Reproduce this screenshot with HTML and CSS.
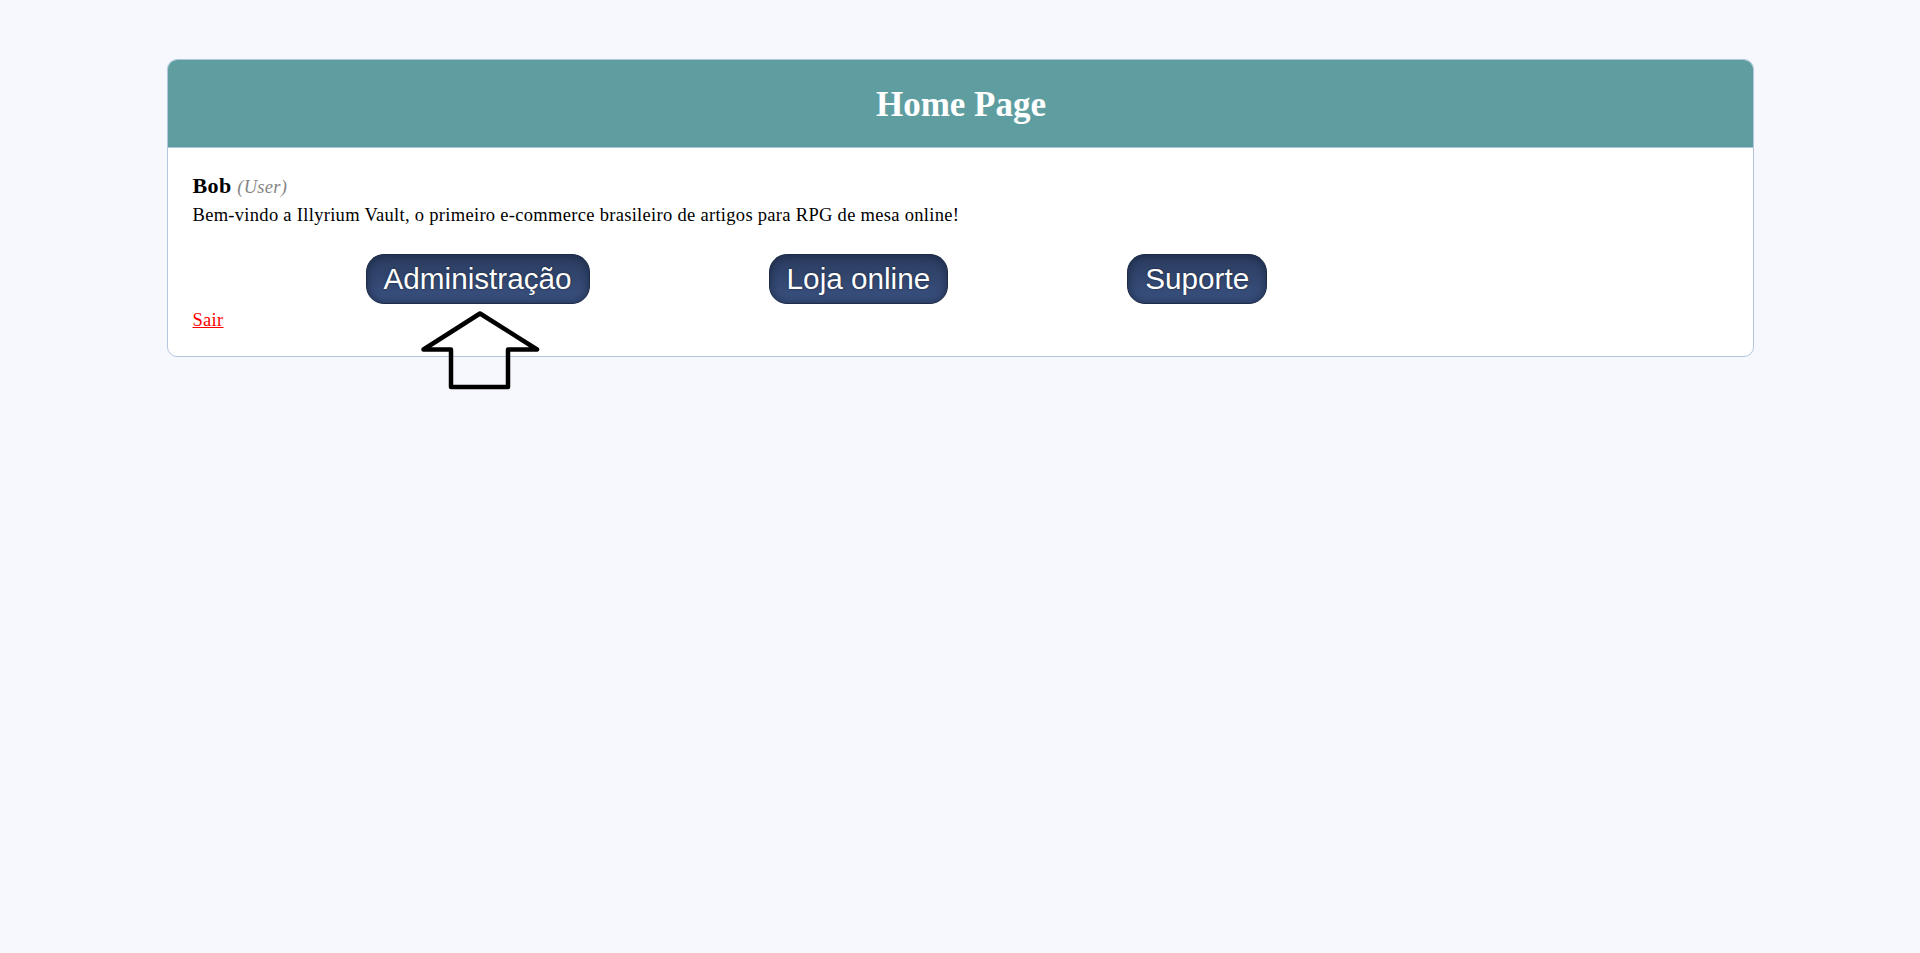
FILE: index.html
```html
<!DOCTYPE html>
<html lang="pt-BR">
<head>
<meta charset="utf-8">
<title>Home Page</title>
<link rel="stylesheet" href="styles.css">
</head>
<body>
<div class="page">
  <div class="card">
    <div class="card-header">
      <h1 class="title">Home Page</h1>
    </div>
    <div class="card-body">
      <div class="user"><span class="user-name">Bob</span> <span class="user-role">(User)</span></div>
      <p class="welcome">Bem-vindo a Illyrium Vault, o primeiro e-commerce brasileiro de artigos para RPG de mesa online!</p>
      <div class="actions">
        <a class="btn" href="#">Administração</a>
        <a class="btn" href="#">Loja online</a>
        <a class="btn" href="#">Suporte</a>
      </div>
      <a class="logout" href="#">Sair</a>
    </div>
  </div>
  <svg class="pointer" width="120" height="80" viewBox="0 0 120 80" aria-hidden="true">
    <polygon points="59,2.5 116,38.5 87,38.5 87,76 30,76 30,38.5 2.5,38.5" fill="none" stroke="#000" stroke-width="4.5" stroke-linejoin="round"/>
  </svg>
</div>
</body>
</html>
```
FILE: styles.css
```css
html, body {
  margin: 0;
  padding: 0;
}
html {
  min-height: 100%;
  background: #f7f8fe;
}
body {
  min-height: 100vh;
  box-sizing: border-box;
  background: #f7f8fe;
  font-family: "Liberation Serif", "Times New Roman", serif;
  font-size: 18.5px;
  color: #000;
  padding-top: 59px;
}
.page {
  position: relative;
  width: 1587px;
  margin: 0 auto;
  padding-bottom: 40px;
}
.card {
  box-sizing: border-box;
  background: #ffffff;
  border: 1px solid #b3c6dd;
  border-radius: 10px;
}
.card-header {
  background: #5f9ea0;
  border-radius: 9px 9px 0 0;
  height: 87px;
  display: flex;
  align-items: center;
  justify-content: center;
  border-bottom: 1px solid #a9c4d4;
}
.title {
  margin: 0;
  color: #ffffff;
  font-family: "Liberation Serif", "Times New Roman", serif;
  font-weight: bold;
  font-size: 35px;
  line-height: 40px;
  padding-top: 2px;
  padding-left: 2px;
}
.card-body {
  padding: 26px 24px 25px 25px;
}
.user {
  line-height: 24px;
}
.user-name {
  font-weight: bold;
  font-size: 22px;
  letter-spacing: 0.4px;
}
.user-role {
  font-style: italic;
  color: #858585;
  font-size: 18.5px;
  letter-spacing: 0.3px;
  margin-left: 1px;
}
.welcome {
  margin: 6px 0 0;
  line-height: 20px;
  letter-spacing: 0.3px;
}
.actions {
  display: flex;
  gap: 179px;
  margin: 29px 0 0 173px;
}
.btn {
  display: inline-block;
  font-family: "Liberation Sans", Arial, sans-serif;
  font-size: 29.7px;
  line-height: 34px;
  padding: 7px 17px;
  color: #ffffff;
  text-decoration: none;
  border: 1px solid #1f2c47;
  border-radius: 18px;
  background-color: #34486f;
  background-image: linear-gradient(to bottom, #2b3c60 0%, #2f4268 30%, #3a5180 100%);
  box-shadow: inset 0 0 8px rgba(10, 20, 40, 0.55);
  text-shadow: 0 0 2px rgba(0, 0, 0, 0.6);
}
.logout {
  display: inline-block;
  margin-top: 6px;
  line-height: 20px;
  color: #ff0000;
  text-decoration: underline;
  letter-spacing: 0.3px;
}
.pointer {
  position: absolute;
  left: 254px;
  top: 252px;
}
```
